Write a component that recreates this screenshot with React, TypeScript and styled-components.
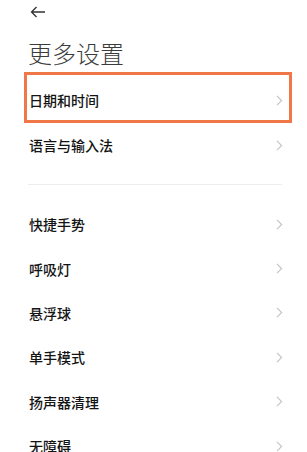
import React from "react";
import styled, { createGlobalStyle } from "styled-components";

const Global = createGlobalStyle`
  html, body { margin: 0; padding: 0; background: #ffffff; }
  body { font-family: "Noto Sans CJK SC", "Noto Sans", sans-serif; overflow: hidden; }
`;

const Page = styled.div`
  width: 307px;
  height: 452px;
  overflow: hidden;
  background: #fff;
`;

const TopBar = styled.div`
  height: 24px;
  padding-left: 30px;
  display: flex;
  align-items: center;
`;

const Title = styled.h1`
  margin: 14px 0 0 28px;
  font-size: 24px;
  line-height: 30px;
  font-weight: 300;
  color: #3c3c3c;
  letter-spacing: 0px;
`;

const List = styled.div`
  padding: 10px 25px 0 28px;
  display: flex;
  flex-direction: column;
`;

const Row = styled.div<{ $h?: number }>`
  position: relative;
  height: ${(p) => p.$h ?? 44.4}px;
  display: flex;
  align-items: center;
  justify-content: space-between;
`;

const Label = styled.span`
  font-size: 14px;
  font-weight: 500;
  color: #141414;
  padding-left: 1px;
`;

const Highlight = styled.div`
  position: absolute;
  left: -4px;
  right: -10px;
  top: -6px;
  bottom: -1px;
  border: 3px solid #ef7748;
  pointer-events: none;
`;

const Divider = styled.div`
  height: 1px;
  background: #ededed;
  margin: 16px 0 17px;
`;

const Chevron = () => (
  <svg width="7" height="11" viewBox="0 0 7 11" style={{ marginRight: -1 }}>
    <path d="M1 0.8 L5.6 5.5 L1 10.2" fill="none" stroke="#c2c2c2" strokeWidth="1.1" />
  </svg>
);

const BackArrow = () => (
  <svg width="16" height="12" viewBox="0 0 16 12">
    <path d="M15 6 H1.5 M6.5 1 L1.5 6 L6.5 11" fill="none" stroke="#333" strokeWidth="1.3" />
  </svg>
);

const group2 = ["快捷手势", "呼吸灯", "悬浮球", "单手模式", "扬声器清理", "无障碍"];

export default function App() {
  return (
    <Page>
      <Global />
      <TopBar>
        <BackArrow />
      </TopBar>
      <Title>更多设置</Title>
      <List>
        <Row $h={44}>
          <Label>日期和时间</Label>
          <Chevron />
          <Highlight />
        </Row>
        <Row $h={46}>
          <Label>语言与输入法</Label>
          <Chevron />
        </Row>
        <Divider />
        {group2.map((t) => (
          <Row key={t}>
            <Label>{t}</Label>
            <Chevron />
          </Row>
        ))}
      </List>
    </Page>
  );
}
